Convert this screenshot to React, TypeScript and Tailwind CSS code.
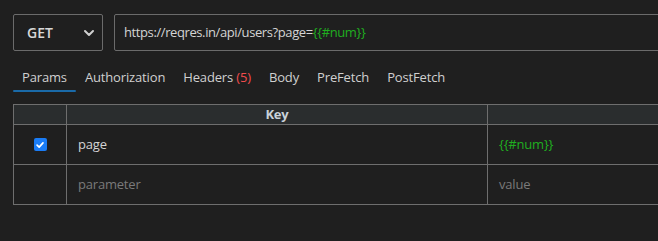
import { ChevronDown } from "lucide-react";

const tabs = [
  { label: "Params", active: true },
  { label: "Authorization" },
  { label: "Headers", count: 5 },
  { label: "Body" },
  { label: "PreFetch" },
  { label: "PostFetch" },
];

export default function App() {
  return (
    <div
      className="w-[658px] h-[241px] overflow-hidden bg-[#1f1f1f] text-[#d4d4d4] pl-[13px] pt-[14px]"
      style={{ fontFamily: '"Open Sans", "Noto Sans", sans-serif' }}
    >
      {/* Request line */}
      <div className="flex gap-[11px]">
        <div className="flex h-[37px] w-[90px] shrink-0 items-center justify-between rounded-[2px] border border-[#6b6b6b] pl-[13px] pr-[5px]">
          <span className="text-[14px] font-semibold text-[#d8d8d8]">GET</span>
          <ChevronDown className="h-4 w-4 text-[#d0d0d0]" strokeWidth={3} />
        </div>
        <div className="flex h-[37px] w-[700px] shrink-0 items-center rounded-[2px] border border-[#6b6b6b] pl-[9px] text-[13px] tracking-[-0.4px]">
          <span>https://reqres.in/api/users?page=</span>
          <span className="text-[#1fae1f]">{"{{#num}}"}</span>
        </div>
      </div>

      {/* Tabs */}
      <div className="mt-[17px] flex text-[13px] tracking-[-0.15px] text-[#d0d0d0]">
        {tabs.map((t) => (
          <div key={t.label} className="flex flex-col">
            <div className="px-[9px] leading-[18px]">
              {t.label}
              {t.count !== undefined && (
                <span className="text-[#f14c4c]"> ({t.count})</span>
              )}
            </div>
            <div
              className={
                t.active
                  ? "mt-[4px] h-[2px] rounded-full bg-[#1a6aa8]"
                  : "mt-[4px] h-[2px]"
              }
            />
          </div>
        ))}
      </div>

      {/* Params table */}
      <div className="mt-[12px] w-[900px] border-l border-t border-[#6e6e6e] text-[13px] tracking-[-0.2px]">
        <div className="grid grid-cols-[53px_421px_1fr] bg-[#2a2d2e]">
          <div className="h-[20px] border-b border-r border-[#6e6e6e]" />
          <div className="flex h-[20px] items-center justify-center border-b border-r border-[#6e6e6e] font-bold text-[#c9d1d9]">
            Key
          </div>
          <div className="h-[20px] border-b border-[#6e6e6e]" />
        </div>
        <div className="grid grid-cols-[53px_421px_1fr]">
          <div className="flex h-[40px] items-center justify-center border-b border-r border-[#6e6e6e]">
            <span className="flex h-[13px] w-[13px] items-center justify-center rounded-[2px] bg-[#1a7cf5]">
              <svg viewBox="0 0 12 12" className="h-[10px] w-[10px]">
                <path d="M2.5 6.2 L5 8.6 L9.6 3.4" fill="none" stroke="white" strokeWidth="2" strokeLinecap="round" strokeLinejoin="round" />
              </svg>
            </span>
          </div>
          <div className="flex h-[40px] items-center border-b border-r border-[#6e6e6e] pl-[11px] text-[#d4d4d4]">
            page
          </div>
          <div className="flex h-[40px] items-center border-b border-[#6e6e6e] pl-[11px] text-[#1fae1f]">
            {"{{#num}}"}
          </div>
        </div>
        <div className="grid grid-cols-[53px_421px_1fr]">
          <div className="h-[40px] border-b border-r border-[#6e6e6e]" />
          <div className="flex h-[40px] items-center border-b border-r border-[#6e6e6e] pl-[11px] text-[#7a7a7a]">
            parameter
          </div>
          <div className="flex h-[40px] items-center border-b border-[#6e6e6e] pl-[11px] text-[#7a7a7a]">
            value
          </div>
        </div>
      </div>
    </div>
  );
}
